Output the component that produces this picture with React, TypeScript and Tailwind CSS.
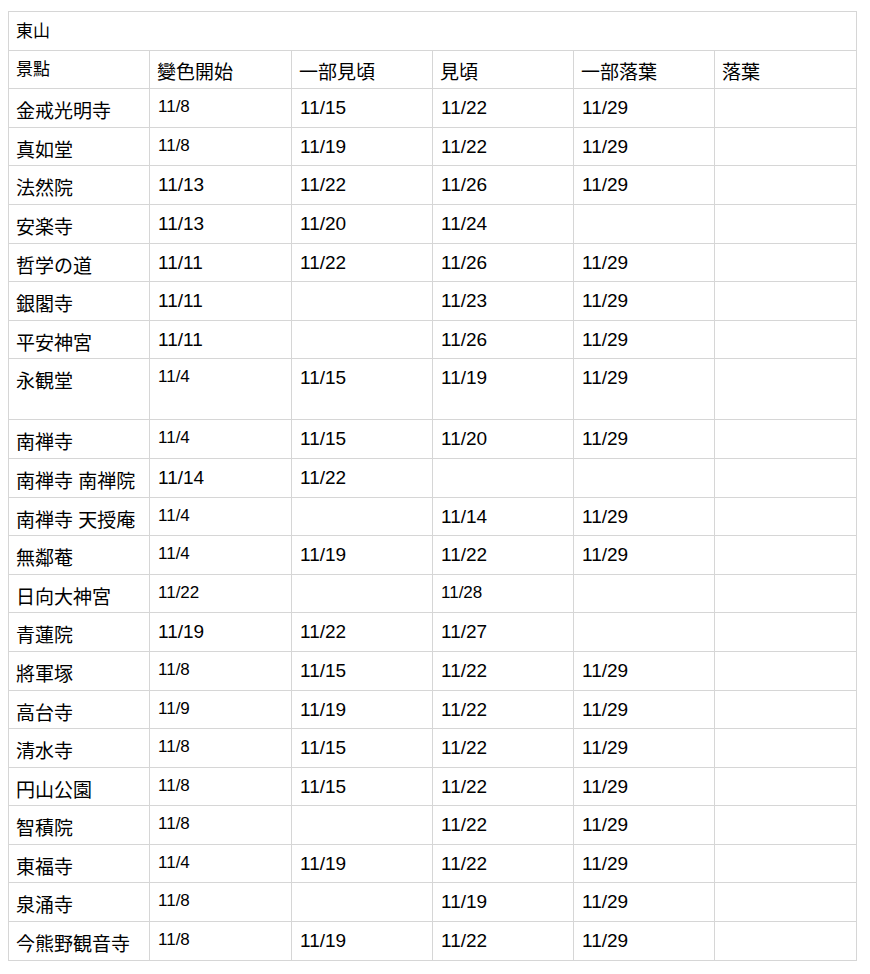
import React from "react";

// "~" marks a date that was typed in the smaller size
const rows: { name: string; cells: string[]; tall?: boolean }[] = [
  { name: "金戒光明寺", cells: ["~11/8", "11/15", "11/22", "11/29", ""] },
  { name: "真如堂", cells: ["~11/8", "11/19", "11/22", "11/29", ""] },
  { name: "法然院", cells: ["11/13", "11/22", "11/26", "11/29", ""] },
  { name: "安楽寺", cells: ["11/13", "11/20", "11/24", "", ""] },
  { name: "哲学の道", cells: ["11/11", "11/22", "11/26", "11/29", ""] },
  { name: "銀閣寺", cells: ["11/11", "", "11/23", "11/29", ""] },
  { name: "平安神宮", cells: ["11/11", "", "11/26", "11/29", ""] },
  { name: "永観堂", cells: ["~11/4", "11/15", "11/19", "11/29", ""], tall: true },
  { name: "南禅寺", cells: ["~11/4", "11/15", "11/20", "11/29", ""] },
  { name: "南禅寺 南禅院", cells: ["11/14", "11/22", "", "", ""] },
  { name: "南禅寺 天授庵", cells: ["~11/4", "", "11/14", "11/29", ""] },
  { name: "無鄰菴", cells: ["~11/4", "11/19", "11/22", "11/29", ""] },
  { name: "日向大神宮", cells: ["~11/22", "", "~11/28", "", ""] },
  { name: "青蓮院", cells: ["11/19", "11/22", "11/27", "", ""] },
  { name: "將軍塚", cells: ["~11/8", "11/15", "11/22", "11/29", ""] },
  { name: "高台寺", cells: ["~11/9", "11/19", "11/22", "11/29", ""] },
  { name: "清水寺", cells: ["~11/8", "11/15", "11/22", "11/29", ""] },
  { name: "円山公園", cells: ["~11/8", "11/15", "11/22", "11/29", ""] },
  { name: "智積院", cells: ["~11/8", "", "11/22", "11/29", ""] },
  { name: "東福寺", cells: ["~11/4", "11/19", "11/22", "11/29", ""] },
  { name: "泉涌寺", cells: ["~11/8", "", "11/19", "11/29", ""] },
  { name: "今熊野観音寺", cells: ["~11/8", "11/19", "11/22", "11/29", ""] },
];

const headers = ["變色開始", "一部見頃", "見頃", "一部落葉", "落葉"];

function DateCell({ value, tall }: { value: string; tall?: boolean }) {
  const small = value.startsWith("~");
  const text = small ? value.slice(1) : value;
  return (
    <div
      className={`bg-white pl-[8px] leading-none ${tall ? "h-[60px]" : "h-[37.6px]"} ${
        small ? "pt-[9px] text-[17px]" : "pt-[9px] text-[19px]"
      }`}
    >
      {text}
    </div>
  );
}

export default function App() {
  return (
    <div
      className="min-h-screen bg-white pl-[8px] pt-[11px] text-black"
      style={{ fontFamily: '"Liberation Sans", "Noto Sans CJK JP", sans-serif' }}
    >
      <div className="grid w-[849px] grid-cols-[140px_141px_140px_140px_140px_141px] gap-px border border-[#d6d6d6] bg-[#d6d6d6]">
        {/* title row */}
        <div className="col-span-6 h-[37.6px] bg-white pl-[7px] pt-[11px] text-[17px] leading-none">東山</div>

        {/* header row */}
        <div className="h-[37.6px] bg-white pl-[7px] pt-[10px] text-[17px] leading-none">景點</div>
        {headers.map((h) => (
          <div key={h} className="h-[37.6px] bg-white pl-[7px] pt-[12px] text-[19px] leading-none">
            {h}
          </div>
        ))}

        {rows.map((r) => (
          <React.Fragment key={r.name}>
            <div
              className={`bg-white pl-[7px] pt-[13px] text-[19px] leading-none ${
                r.tall ? "h-[60px]" : "h-[37.6px]"
              }`}
            >
              {r.name}
            </div>
            {r.cells.map((c, i) => (
              <DateCell key={i} value={c} tall={r.tall} />
            ))}
          </React.Fragment>
        ))}
      </div>
    </div>
  );
}
